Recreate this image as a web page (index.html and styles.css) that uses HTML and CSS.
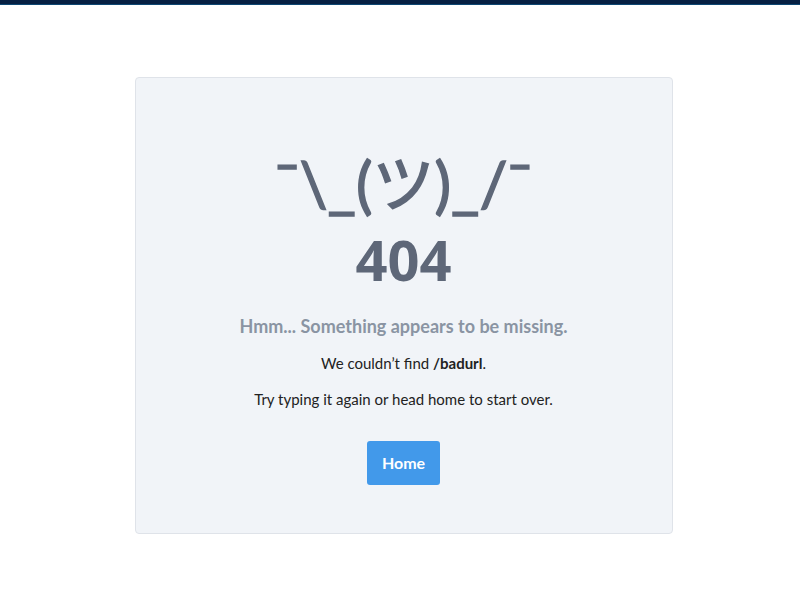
FILE: index.html
```html
<!DOCTYPE html>
<html lang="en">

<head>
    <meta charset="UTF-8">
    <meta name="viewport" content="width=device-width, initial-scale=1.0">
    <title>Page not found</title>
    <link rel="stylesheet" href="styles.css">
</head>

<body>
    <div class="topbar"></div>
    <main class="page">
        <div class="card">
            <div class="shrug">¯\_(ツ)_/¯</div>
            <h1 class="code">404</h1>
            <h2 class="lead">Hmm... Something appears to be missing.</h2>
            <p>We couldn’t find <strong>/badurl</strong>.</p>
            <p class="hint">Try typing it again or head home to start over.</p>
            <a class="btn" href="#">Home</a>
        </div>
    </main>
</body>

</html>
```

FILE: styles.css
```css
body {
    margin: 0;
    font-family: Lato, "Noto Sans", sans-serif;
    background: #ffffff;
    color: #222222;
}

.topbar {
    height: 4px;
    background: #062043;
    border-bottom: 1px solid #0d4672;
}

.page {
    display: flex;
    justify-content: center;
    padding: 72px 0 0 7px;
}

.card {
    width: 536px;
    background: #f1f4f8;
    border: 1px solid #dfe3e9;
    border-radius: 4px;
    text-align: center;
    padding: 67px 0 48px;
}

.shrug {
    font-family: Lato, "Noto Sans CJK JP", sans-serif;
    font-size: 62px;
    line-height: 76px;
    color: #5e6778;
    -webkit-text-stroke: 1.5px #5e6778;
}

.code {
    margin: 3px 0 0;
    font-family: "Noto Sans", sans-serif;
    font-size: 56px;
    line-height: 70px;
    font-weight: 700;
    color: #5e6778;
}

.lead {
    margin: 21px 0 0;
    font-size: 18px;
    font-weight: 700;
    color: #8a94a3;
}

p {
    margin: 15px 0 0;
    font-size: 15px;
    line-height: 23px;
}

.hint {
    margin-top: 13px;
}

.btn {
    display: inline-block;
    margin-top: 30px;
    padding: 11px 15px;
    background: #4299ea;
    color: #ffffff;
    font-weight: 700;
    font-size: 16px;
    line-height: 22px;
    border-radius: 3px;
    text-decoration: none;
}
```
